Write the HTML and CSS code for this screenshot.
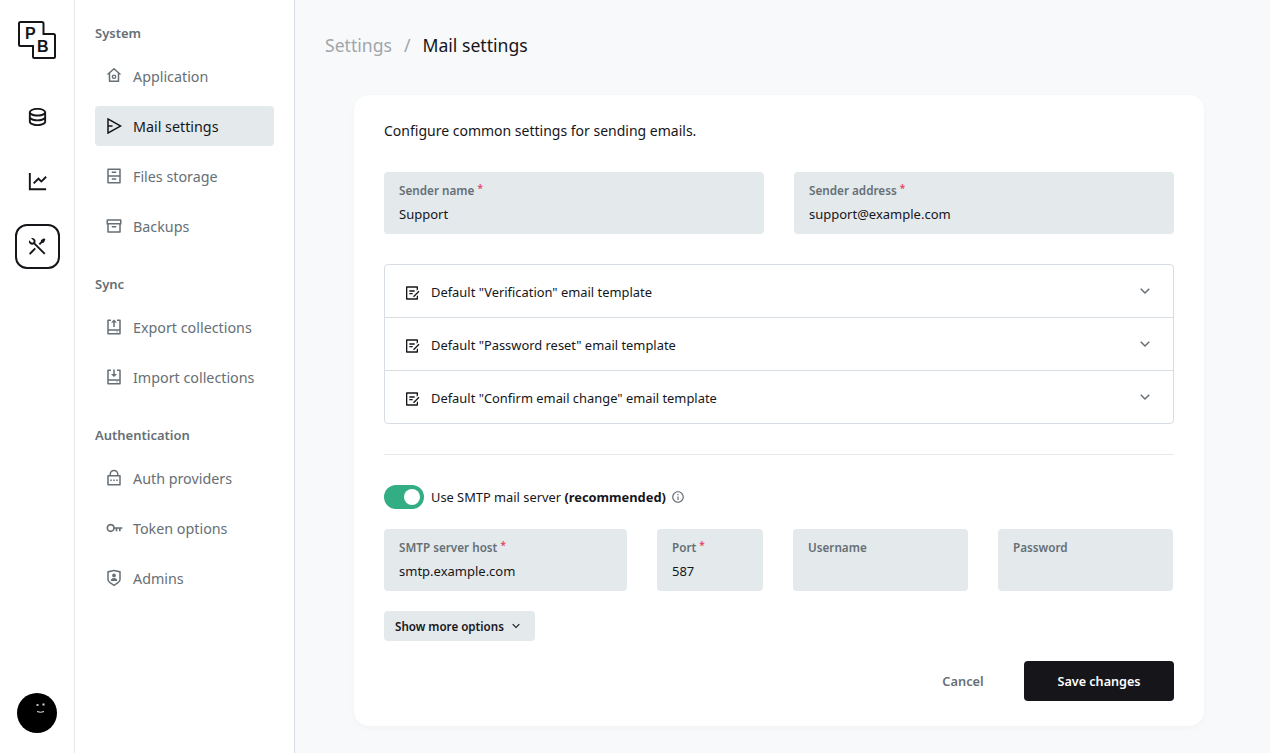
FILE: index.html
```html
<!DOCTYPE html>
<html lang="en">
<head>
  <meta charset="UTF-8">
  <meta name="viewport" content="width=device-width, initial-scale=1.0">
  <title>Mail settings</title>
  <link rel="stylesheet" href="styles.css">
</head>
<body>
  <aside class="app-bar">
    <a class="logo" href="#">
      <svg class="logo-frame" viewBox="0 0 40 40" width="40" height="40"><path d="M3.5 2H25a1.5 1.5 0 0 1 1.5 1.5V14h10a1.5 1.5 0 0 1 1.5 1.5v21a1.5 1.5 0 0 1-1.5 1.5h-19a1.5 1.5 0 0 1-1.5-1.5V26H3.5A1.5 1.5 0 0 1 2 24.5v-21A1.5 1.5 0 0 1 3.5 2z" fill="none" stroke="#16161a" stroke-width="2"/></svg>
      <span class="logo-p">P</span>
      <span class="logo-b">B</span>
    </a>
    <nav class="app-nav">
      <a class="app-link" href="#"><svg viewBox="0 0 24 24"><path d="M5 12.5c0 .313.461.858 1.53 1.393C7.914 14.585 9.877 15 12 15c2.123 0 4.086-.415 5.47-1.107 1.069-.535 1.53-1.08 1.53-1.393v-2.171C17.35 11.349 14.827 12 12 12s-5.35-.652-7-1.671V12.5zm14 2.829C17.35 16.349 14.827 17 12 17s-5.35-.652-7-1.671V17.5c0 .313.461.858 1.53 1.393C7.914 19.585 9.877 20 12 20c2.123 0 4.086-.415 5.47-1.107 1.069-.535 1.53-1.08 1.53-1.393v-2.171zM3 17.5v-10C3 5.015 7.03 3 12 3s9 2.015 9 4.5v10c0 2.485-4.03 4.5-9 4.5s-9-2.015-9-4.5zm9-7.5c2.123 0 4.086-.415 5.47-1.107C18.539 8.358 19 7.813 19 7.5c0-.313-.461-.858-1.53-1.393C16.086 5.415 14.123 5 12 5c-2.123 0-4.086.415-5.47 1.107C5.461 6.642 5 7.187 5 7.5c0 .313.461.858 1.53 1.393C7.914 9.585 9.877 10 12 10z"/></svg></a>
      <a class="app-link" href="#"><svg viewBox="0 0 24 24"><path d="M5 3V19H21V21H3V3H5ZM20.2929 6.29289L21.7071 7.70711L16 13.4142L13 10.415L8.70711 14.7071L7.29289 13.2929L13 7.58579L16 10.585L20.2929 6.29289Z"/></svg></a>
      <a class="app-link app-link-active" href="#"><svg viewBox="0 0 24 24"><path d="M5.32943 3.27158C6.56252 2.8332 7.9923 3.10749 8.97927 4.09446C10.1002 5.21537 10.3019 6.90741 9.5843 8.23385L20.293 18.9437L18.8788 20.3579L8.16982 9.64875C6.84325 10.3669 5.15069 10.1654 4.02952 9.04421C3.04227 8.05696 2.7681 6.62665 3.20701 5.39332L5.44373 7.63C6.02952 8.21578 6.97927 8.21578 7.56505 7.63C8.15084 7.04421 8.15084 6.09446 7.56505 5.50868L5.32943 3.27158ZM15.6968 5.15512L18.8788 3.38736L20.293 4.80157L18.5252 7.98355L16.7574 8.3371L14.6361 10.4584L13.2219 9.04421L15.3432 6.92289L15.6968 5.15512ZM8.97927 13.2868L10.3935 14.7011L5.09018 20.0044C4.69966 20.3949 4.06649 20.3949 3.67597 20.0044C3.31334 19.6417 3.28744 19.0699 3.59826 18.6774L3.67597 18.5902L8.97927 13.2868Z"/></svg></a>
    </nav>
    <a class="avatar" href="#">
      <svg viewBox="0 0 40 40" width="40" height="40"><circle cx="20" cy="20" r="20" fill="#000"/><rect x="19.5" y="11" width="2" height="2" fill="#bbb"/><rect x="25.5" y="10.5" width="2" height="2" fill="#ddd"/><path d="M20 18.6q3.5 1.3 7 0" fill="none" stroke="#eee" stroke-width="1"/></svg>
    </a>
  </aside>

  <aside class="side-menu">
    <div class="menu-title">System</div>
    <a class="menu-item" href="#"><svg viewBox="0 0 24 24"><path d="M19 19c0 .552-.448 1-1 1H6c-.552 0-1-.448-1-1v-9H2l9.327-8.48c.382-.348.964-.348 1.346 0L22 10h-3v9zM7 18h10V8.157l-5-4.546-5 4.546V18z"/><circle cx="12" cy="13" r="2.2" fill="none" stroke="currentColor" stroke-width="1.8"/></svg>Application</a>
    <a class="menu-item menu-item-active" href="#"><svg viewBox="0 0 24 24"><path d="M3.5 1.346a.5.5 0 0 1 .241.061l18.462 10.155a.5.5 0 0 1 0 .876L3.741 22.593A.5.5 0 0 1 3 22.155V1.846a.5.5 0 0 1 .5-.5zM5 4.382V11h5v2H5v6.618L18.85 12 5 4.382z"/></svg>Mail settings</a>
    <a class="menu-item" href="#"><svg viewBox="0 0 24 24"><path d="M3 2.992C3 2.444 3.445 2 3.993 2h16.014a1 1 0 0 1 .993.992v18.016a.993.993 0 0 1-.993.992H3.993A1 1 0 0 1 3 21.008V2.992zM19 11V4H5v7h14zm0 2H5v7h14v-7zM9 6h6v2H9V6zm0 9h6v2H9v-2z"/></svg>Files storage</a>
    <a class="menu-item" href="#"><svg viewBox="0 0 24 24"><path d="M3 10H2V4.003C2 3.449 2.455 3 2.992 3h18.016A.99.99 0 0 1 22 4.003V10h-1v10.001a.996.996 0 0 1-.993.999H3.993A.996.996 0 0 1 3 20.001V10zm16 0H5v9h14v-9zM4 5v3h16V5H4zm5 7h6v2H9v-2z"/></svg>Backups</a>

    <div class="menu-title">Sync</div>
    <a class="menu-item" href="#"><svg viewBox="0 0 24 24"><path d="M8 2v2H5v11h14V4h-3V2h4a1 1 0 0 1 1 1v18a1 1 0 0 1-1 1H4a1 1 0 0 1-1-1V3a1 1 0 0 1 1-1h4zm11 15H5v3h14v-3zm-2 1v1h-2v-1h2zM12 2l4 4h-3v6h-2V6H8l4-4z"/></svg>Export collections</a>
    <a class="menu-item" href="#"><svg viewBox="0 0 24 24"><path d="M8 2v2H5v11h14V4h-3V2h4a1 1 0 0 1 1 1v18a1 1 0 0 1-1 1H4a1 1 0 0 1-1-1V3a1 1 0 0 1 1-1h4zm11 15H5v3h14v-3zm-2 1v1h-2v-1h2zM11 2h2v6h3l-4 4-4-4h3V2z"/></svg>Import collections</a>

    <div class="menu-title">Authentication</div>
    <a class="menu-item" href="#"><svg viewBox="0 0 24 24"><path d="M18 8h2a1 1 0 0 1 1 1v12a1 1 0 0 1-1 1H4a1 1 0 0 1-1-1V9a1 1 0 0 1 1-1h2V7a6 6 0 1 1 12 0v1zM5 10v10h14V10H5zm6 4h2v2h-2v-2zm-4 0h2v2H7v-2zm8 0h2v2h-2v-2zm1-6V7a4 4 0 1 0-8 0v1h8z"/></svg>Auth providers</a>
    <a class="menu-item menu-item-key" href="#"><svg viewBox="0 0 24 24"><path d="M12.917 13c-.49 2.263-2.255 4-4.917 4-2.761 0-5-2.239-5-5s2.239-5 5-5c2.662 0 4.428 1.737 4.917 4H22v2h-2v3h-2v-3h-2v3h-2v-3h-1.083zM8 15a3 3 0 1 0 0-6 3 3 0 0 0 0 6z"/></svg>Token options</a>
    <a class="menu-item" href="#"><svg viewBox="0 0 24 24"><path d="M3.783 2.826L12 1l8.217 1.826a1 1 0 0 1 .783.976v9.987a6 6 0 0 1-2.672 4.992L12 23l-6.328-4.219A6 6 0 0 1 3 13.79V3.802a1 1 0 0 1 .783-.976zM5 4.604v9.185a4 4 0 0 0 1.781 3.328L12 20.597l5.219-3.48A4 4 0 0 0 19 13.79V4.604L12 3.05 5 4.604zM12 11a2.5 2.5 0 1 1 0-5 2.5 2.5 0 0 1 0 5zm-4.473 5a4.5 4.5 0 0 1 8.946 0H7.527z"/></svg>Admins</a>
  </aside>

  <main class="page">
    <div class="breadcrumbs">
      <span class="crumb-hint">Settings</span>
      <span class="crumb-sep">/</span>
      <span>Mail settings</span>
    </div>

    <form class="panel">
      <p class="intro">Configure common settings for sending emails.</p>

      <div class="grid-two">
        <div class="field">
          <label>Sender name <span class="req">*</span></label>
          <input type="text" value="Support">
        </div>
        <div class="field">
          <label>Sender address <span class="req">*</span></label>
          <input type="text" value="support@example.com">
        </div>
      </div>

      <div class="accordion">
        <div class="acc-row">
          <svg class="acc-icon" viewBox="0 0 24 24"><path d="M20 2a1 1 0 0 1 1 1v3.757l-2 2V4H5v16h14v-2.758l2-2V21a1 1 0 0 1-1 1H4a1 1 0 0 1-1-1V3a1 1 0 0 1 1-1h16zm1.778 6.808l1.414 1.414L15.414 18l-1.416-.002.002-1.412 7.778-7.778zM13 12v2H8v-2h5zm3-4v2H8V8h8z"/></svg>
          <span class="acc-label">Default "Verification" email template</span>
          <svg class="acc-arrow" viewBox="0 0 24 24"><path d="M12 13.172l4.95-4.95 1.414 1.414L12 16 5.636 9.636 7.05 8.222z"/></svg>
        </div>
        <div class="acc-row">
          <svg class="acc-icon" viewBox="0 0 24 24"><path d="M20 2a1 1 0 0 1 1 1v3.757l-2 2V4H5v16h14v-2.758l2-2V21a1 1 0 0 1-1 1H4a1 1 0 0 1-1-1V3a1 1 0 0 1 1-1h16zm1.778 6.808l1.414 1.414L15.414 18l-1.416-.002.002-1.412 7.778-7.778zM13 12v2H8v-2h5zm3-4v2H8V8h8z"/></svg>
          <span class="acc-label">Default "Password reset" email template</span>
          <svg class="acc-arrow" viewBox="0 0 24 24"><path d="M12 13.172l4.95-4.95 1.414 1.414L12 16 5.636 9.636 7.05 8.222z"/></svg>
        </div>
        <div class="acc-row">
          <svg class="acc-icon" viewBox="0 0 24 24"><path d="M20 2a1 1 0 0 1 1 1v3.757l-2 2V4H5v16h14v-2.758l2-2V21a1 1 0 0 1-1 1H4a1 1 0 0 1-1-1V3a1 1 0 0 1 1-1h16zm1.778 6.808l1.414 1.414L15.414 18l-1.416-.002.002-1.412 7.778-7.778zM13 12v2H8v-2h5zm3-4v2H8V8h8z"/></svg>
          <span class="acc-label">Default "Confirm email change" email template</span>
          <svg class="acc-arrow" viewBox="0 0 24 24"><path d="M12 13.172l4.95-4.95 1.414 1.414L12 16 5.636 9.636 7.05 8.222z"/></svg>
        </div>
      </div>

      <hr class="divider">

      <div class="toggle-row">
        <span class="toggle"></span>
        <span>Use SMTP mail server <strong>(recommended)</strong></span>
        <svg class="info-icon" viewBox="0 0 24 24"><path d="M12 22C6.477 22 2 17.523 2 12S6.477 2 12 2s10 4.477 10 10-4.477 10-10 10zm0-2a8 8 0 1 0 0-16 8 8 0 0 0 0 16zM11 7h2v2h-2V7zm0 4h2v6h-2v-6z"/></svg>
      </div>

      <div class="grid-smtp">
        <div class="field">
          <label>SMTP server host <span class="req">*</span></label>
          <input type="text" value="smtp.example.com">
        </div>
        <div class="field">
          <label>Port <span class="req">*</span></label>
          <input type="text" value="587">
        </div>
        <div class="field">
          <label>Username</label>
          <input type="text">
        </div>
        <div class="field">
          <label>Password</label>
          <input type="password">
        </div>
      </div>

      <button type="button" class="btn-more">Show more options
        <svg viewBox="0 0 24 24"><path d="M12 13.172l4.95-4.95 1.414 1.414L12 16 5.636 9.636 7.05 8.222z"/></svg>
      </button>

      <div class="actions">
        <button type="button" class="btn-cancel">Cancel</button>
        <button type="button" class="btn-save">Save changes</button>
      </div>
    </form>
  </main>
</body>
</html>
```
FILE: styles.css
```css
* {
  box-sizing: border-box;
}

body {
  display: flex;
  height: 100vh;
  margin: 0;
  overflow: hidden;
  font-family: "Noto Sans", Arial, sans-serif;
  font-size: 14.3px;
  color: #16161a;
  background-color: #f8f9fa;
}

a {
  color: inherit;
  text-decoration: none;
}

svg {
  fill: currentColor;
  flex-shrink: 0;
}

/* far left bar */
.app-bar {
  display: flex;
  flex-direction: column;
  align-items: center;
  width: 75px;
  flex-shrink: 0;
  padding: 20px 0;
  background-color: #fff;
  border-right: 1px solid #e4e9ec;
}

.logo {
  position: relative;
  display: block;
  width: 40px;
  height: 40px;
}

.logo-frame {
  display: block;
}

.logo-p,
.logo-b {
  position: absolute;
  font-family: "Liberation Sans", Arial, sans-serif;
  font-size: 16px;
  font-weight: 700;
  line-height: 16px;
}

.logo-p {
  left: 8px;
  top: 6px;
}

.logo-b {
  left: 20px;
  top: 19px;
}

.app-nav {
  display: flex;
  flex-direction: column;
  align-items: center;
  gap: 20px;
  margin-top: 34px;
  flex: 1;
}

.app-link {
  display: flex;
  align-items: center;
  justify-content: center;
  width: 45px;
  height: 45px;
  border: 2px solid transparent;
  border-radius: 12px;
}

.app-link svg {
  width: 23px;
  height: 23px;
}

.app-link-active {
  border-color: #16161a;
}

.avatar {
  display: block;
  width: 40px;
  height: 40px;
}

/* settings menu */
.side-menu {
  display: flex;
  flex-direction: column;
  width: 220px;
  flex-shrink: 0;
  padding: 20px 20px 0;
  background-color: #fff;
  border-right: 1px solid #d7dde4;
}

.menu-title {
  height: 26px;
  margin-bottom: 10px;
  font-size: 13px;
  font-weight: 600;
  line-height: 26px;
  color: #666f75;
}

.menu-item + .menu-title {
  margin-top: 15px;
}

.menu-item {
  display: flex;
  align-items: center;
  gap: 10px;
  height: 40px;
  margin-bottom: 10px;
  padding-left: 10px;
  border-radius: 4px;
  color: #666f75;
}

.menu-item svg {
  width: 18px;
  height: 18px;
}

.menu-item-key svg {
  width: 20px;
  height: 20px;
  margin: 0 -1px;
}

.menu-item-active {
  color: #16161a;
  background-color: #e4e9ec;
}

/* main column */
.page {
  flex: 1;
  padding: 0 66px 0 30px;
}

.breadcrumbs {
  display: flex;
  align-items: center;
  gap: 12px;
  height: 90px;
  font-size: 17.6px;
}

.crumb-hint,
.crumb-sep {
  color: #a0a6ac;
}

.panel {
  width: 850px;
  height: 631px;
  margin: 5px 0 0 29px;
  padding: 24px 30px 0;
  background-color: #fff;
  border-radius: 15px;
  box-shadow: 0 2px 6px rgba(0, 0, 0, 0.03);
}

.intro {
  height: 24px;
  margin: 0 0 29px;
  font-size: 14px;
  line-height: 24px;
}

.grid-two {
  display: grid;
  grid-template-columns: 380px 380px;
  gap: 30px;
}

.grid-smtp {
  display: grid;
  grid-template-columns: 243px 106px 175px 175px;
  gap: 30px;
  margin-top: 20px;
}

.field {
  display: flex;
  flex-direction: column;
  height: 62px;
  padding: 9px 15px 0;
  background-color: #e4e9ec;
  border-radius: 4px;
}

.field label {
  height: 18px;
  font-size: 11.7px;
  font-weight: 600;
  line-height: 18px;
  color: #666f75;
}

.field input {
  width: 100%;
  height: 24px;
  margin-top: 3px;
  padding: 0;
  border: none;
  outline: none;
  background: transparent;
  font: inherit;
  font-size: 13px;
  color: #16161a;
}

.req {
  font-size: 10px;
  vertical-align: 3px;
  line-height: 0;
  color: #e34562;
}

.accordion {
  margin-top: 30px;
  border: 1px solid #d7dde4;
  border-radius: 4px;
}

.acc-row {
  display: flex;
  align-items: center;
  height: 53px;
  padding: 0 20px 0 19px;
  border-bottom: 1px solid #d7dde4;
  font-size: 12.9px;
}

.acc-row:last-child {
  height: 52px;
  border-bottom: none;
}

.acc-icon {
  width: 16px;
  height: 16px;
  margin-top: 4px;
  margin-right: 11px;
}

.acc-label {
  flex: 1;
  margin-top: 2px;
}

.acc-arrow {
  width: 18px;
  height: 18px;
  margin-right: -1px;
  color: #666f75;
}

.divider {
  height: 1px;
  margin: 30px 0 0;
  border: none;
  background-color: #e4e9ec;
}

.toggle-row {
  display: flex;
  align-items: center;
  height: 24px;
  margin-top: 30px;
  font-size: 12.85px;
}

.toggle {
  position: relative;
  width: 40px;
  height: 24px;
  margin-right: 7px;
  background-color: #32ad84;
  border-radius: 12px;
}

.toggle::after {
  content: "";
  position: absolute;
  top: 4px;
  right: 4px;
  width: 16px;
  height: 16px;
  background-color: #fff;
  border-radius: 50%;
}

.info-icon {
  width: 14px;
  height: 14px;
  margin-left: 5px;
  color: #666f75;
}

.btn-more {
  display: flex;
  align-items: center;
  gap: 5px;
  height: 30px;
  margin-top: 20px;
  padding: 0 12px 0 11px;
  border: none;
  border-radius: 4px;
  background-color: #e4e9ec;
  font: inherit;
  font-size: 11.6px;
  font-weight: 600;
  color: #16161a;
}

.btn-more svg {
  width: 14px;
  height: 14px;
}

.actions {
  display: flex;
  justify-content: flex-end;
  align-items: center;
  margin-top: 20px;
}

.btn-cancel,
.btn-save {
  height: 40px;
  border: none;
  border-radius: 4px;
  font: inherit;
  font-weight: 600;
}

.btn-cancel {
  width: 100px;
  margin-right: 11px;
  font-size: 12.8px;
  background: transparent;
  color: #666f75;
}

.btn-save {
  width: 150px;
  font-size: 12.6px;
  background-color: #16161a;
  color: #fff;
}
```
